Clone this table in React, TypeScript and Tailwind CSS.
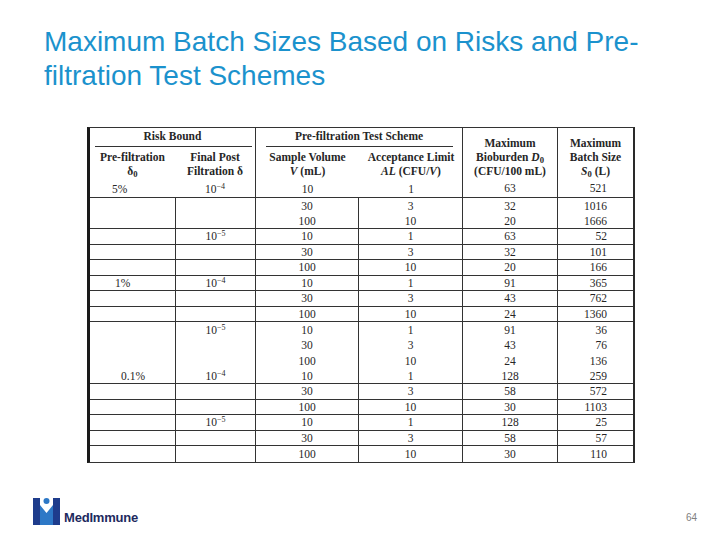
import React from "react";

type Row = {
  pre?: string;
  prePad?: string;
  post?: string;
  v: string;
  al: string;
  d: string;
  s: string;
  line: boolean;
};

// rows under the header (the 5% / 10^-4 row sits inside the header block)
const rows: Row[] = [
  { v: "30", al: "3", d: "32", s: "1016", line: false },
  { v: "100", al: "10", d: "20", s: "1666", line: true },
  { post: "−5", v: "10", al: "1", d: "63", s: "52", line: true },
  { v: "30", al: "3", d: "32", s: "101", line: true },
  { v: "100", al: "10", d: "20", s: "166", line: true },
  { pre: "1%", prePad: "pl-[25px]", post: "−4", v: "10", al: "1", d: "91", s: "365", line: true },
  { v: "30", al: "3", d: "43", s: "762", line: true },
  { v: "100", al: "10", d: "24", s: "1360", line: true },
  { post: "−5", v: "10", al: "1", d: "91", s: "36", line: false },
  { v: "30", al: "3", d: "43", s: "76", line: false },
  { v: "100", al: "10", d: "24", s: "136", line: false },
  { pre: "0.1%", prePad: "pl-[31px]", post: "−4", v: "10", al: "1", d: "128", s: "259", line: true },
  { v: "30", al: "3", d: "58", s: "572", line: true },
  { v: "100", al: "10", d: "30", s: "1103", line: true },
  { post: "−5", v: "10", al: "1", d: "128", s: "25", line: true },
  { v: "30", al: "3", d: "58", s: "57", line: true },
  { v: "100", al: "10", d: "30", s: "110", line: false },
];

function Pow({ exp }: { exp: string }) {
  return (
    <span>
      10<sup className="text-[8px]">{exp}</sup>
    </span>
  );
}

function Logo() {
  return (
    <div className="flex items-end gap-[4px]">
      <svg width="27" height="28" viewBox="0 0 27 28">
        <rect x="0" y="1" width="7" height="27" fill="#1e3c8c" />
        <rect x="20" y="1" width="7" height="27" fill="#1e3c8c" />
        <path d="M7 8 L13.5 16 L20 8 L20 28 L7 28 Z" fill="#2d78c6" />
        <circle cx="13.5" cy="4" r="3" fill="#2d78c6" />
      </svg>
      <span className="font-['Liberation_Sans',Arial,sans-serif] font-bold text-[13px] leading-none text-[#1d2a5e] tracking-[-0.2px] mb-[1px]">
        MedImmune
      </span>
    </div>
  );
}

export default function App() {
  return (
    <div className="w-[720px] h-[540px] bg-white flex flex-col overflow-hidden">
      <h1 className="pt-[25px] pl-[44px] font-['Liberation_Sans',Arial,sans-serif] text-[28px] leading-[34px] text-[#1b92cd] font-normal">
        Maximum Batch Sizes Based on Risks and Pre-
        <br />
        filtration Test Schemes
      </h1>

      <div className="mt-[34px] ml-[87px] w-[548px] border-t border-b border-[#333] border-l-[3px] border-l-[#1a1a1a] border-r-2 border-r-[#2a2a2a] font-['Liberation_Serif','Times_New_Roman',serif] text-[11.5px] text-[#262626]">
        {/* header block */}
        <div className="flex border-b border-[#333]">
          <div className="w-[165px] flex flex-col">
            <div className="h-[18px] flex items-center justify-center font-bold">Risk Bound</div>
            <div className="h-px bg-[#333] ml-[5px] mr-[3px]" />
            <div className="grid grid-cols-[85px_80px] pt-[3px] font-bold leading-[14px] text-center">
              <div>Pre-filtration</div>
              <div>Final Post</div>
              <div>
                δ<sub>0</sub>
              </div>
              <div>Filtration δ</div>
            </div>
            <div className="grid grid-cols-[85px_80px] mt-[3px] h-[16px] items-center">
              <div className="pl-[22px]">5%</div>
              <div className="text-center">
                <Pow exp="−4" />
              </div>
            </div>
          </div>
          <div className="w-[207px] flex flex-col border-l border-[#333]">
            <div className="h-[18px] flex items-center justify-center font-bold">Pre-filtration Test Scheme</div>
            <div className="h-px bg-[#333] ml-[10px] mr-[9px]" />
            <div className="grid grid-cols-[103px_104px] pt-[3px] font-bold leading-[14px] text-center">
              <div>Sample Volume</div>
              <div>Acceptance Limit</div>
              <div>
                <i>V</i> (mL)
              </div>
              <div>
                <i>AL</i> (CFU/<i>V</i>)
              </div>
            </div>
            <div className="grid grid-cols-[103px_104px] mt-[3px] h-[16px] items-center text-center">
              <div>10</div>
              <div>1</div>
            </div>
          </div>
          <div className="w-[95px] flex flex-col border-l border-[#333] pt-[8px] text-center">
            <div className="font-bold leading-[14px]">
              <div>Maximum</div>
              <div>
                Bioburden <i>D</i>
                <sub>0</sub>
              </div>
              <div>(CFU/100 mL)</div>
            </div>
            <div className="mt-[3px] h-[16px] flex items-center justify-center">63</div>
          </div>
          <div className="w-[76px] flex flex-col border-l border-[#333] pt-[8px]">
            <div className="font-bold leading-[14px] text-center">
              <div>Maximum</div>
              <div>Batch Size</div>
              <div>
                <i>S</i>
                <sub>0</sub> (L)
              </div>
            </div>
            <div className="mt-[3px] h-[16px] flex items-center justify-end pr-[26px]">521</div>
          </div>
        </div>

        {/* body rows */}
        {rows.map((r, i) => (
          <div
            key={i}
            className={
              "grid grid-cols-[85px_80px_103px_104px_95px_76px] h-[15.5px] leading-[14px] items-center " +
              (r.line ? "border-b border-[#333]" : "")
            }
          >
            <div className={"h-full flex items-center " + (r.prePad ?? "")}>{r.pre}</div>
            <div className="h-full flex items-center justify-center border-l border-[#333]">
              {r.post ? <Pow exp={r.post} /> : null}
            </div>
            <div className="h-full flex items-center justify-center border-l border-[#333]">{r.v}</div>
            <div className="h-full flex items-center justify-center border-l border-[#333]">{r.al}</div>
            <div className="h-full flex items-center justify-center border-l border-[#333]">{r.d}</div>
            <div className="h-full flex items-center justify-end pr-[26px] border-l border-[#333]">{r.s}</div>
          </div>
        ))}
      </div>

      <div className="mt-auto flex items-end justify-between pl-[33px] pr-[23px] pb-[15px]">
        <Logo />
        <span className="font-['Liberation_Sans',Arial,sans-serif] text-[10px] leading-none text-[#808080] mb-[2px]">
          64
        </span>
      </div>
    </div>
  );
}
